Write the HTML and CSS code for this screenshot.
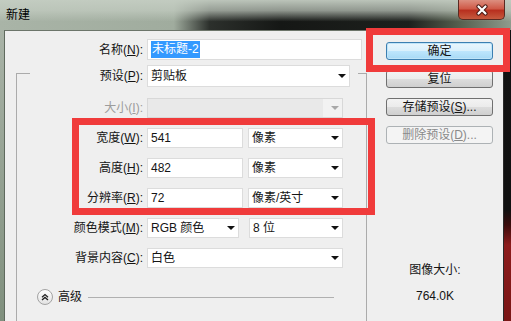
FILE: index.html
```html
<!DOCTYPE html>
<html lang="zh-CN">
<head>
  <meta charset="UTF-8" />
  <title>新建</title>
  <link rel="stylesheet" href="styles.css">
</head>
<body>
  <div class="win">
    <div class="titlebar">
      <span class="title">新建</span>
      <span class="close">
        <svg width="14" height="12" viewBox="0 0 14 12">
          <path d="M3.5 2.5 L10.5 9.5 M10.5 2.5 L3.5 9.5" stroke="#4a1a14" stroke-width="4.2" stroke-linecap="round"/>
          <path d="M3.5 2.5 L10.5 9.5 M10.5 2.5 L3.5 9.5" stroke="#fff" stroke-width="2.2" stroke-linecap="round"/>
        </svg>
      </span>
    </div>

    <div class="frame">
      <div class="edge-l"></div>
      <div class="client">
        <div class="main">
          <div class="row name-row">
            <label class="lbl">名称(<u>N</u>):</label>
            <div class="field f-name"><span class="sel">未标题-2</span></div>
          </div>

          <fieldset class="group">
            <legend>
              <div class="row legend-row">
                <label class="lbl">预设(<u>P</u>):</label>
                <div class="field dd f-preset">剪贴板</div>
              </div>
            </legend>
            <div class="group-body">
              <div class="row">
                <label class="lbl off">大小(<u>I</u>):</label>
                <div class="field dd off f-wide"></div>
              </div>
              <div class="row">
                <label class="lbl">宽度(<u>W</u>):</label>
                <div class="field f-num">541</div>
                <div class="field dd f-unit">像素</div>
              </div>
              <div class="row">
                <label class="lbl">高度(<u>H</u>):</label>
                <div class="field f-num">482</div>
                <div class="field dd f-unit">像素</div>
              </div>
              <div class="row">
                <label class="lbl">分辨率(<u>R</u>):</label>
                <div class="field f-num">72</div>
                <div class="field dd f-unit">像素/英寸</div>
              </div>
              <div class="row">
                <label class="lbl">颜色模式(<u>M</u>):</label>
                <div class="field dd f-mode">RGB 颜色</div>
                <div class="field dd f-bits">8 位</div>
              </div>
              <div class="row">
                <label class="lbl">背景内容(<u>C</u>):</label>
                <div class="field dd f-wide">白色</div>
              </div>
              <div class="adv">
                <span class="adv-btn">
                  <svg width="14" height="14" viewBox="0 0 14 14">
                    <path d="M4 7.2 L7 4.6 L10 7.2 M4 10 L7 7.4 L10 10" fill="none" stroke="#222" stroke-width="1.3"/>
                  </svg>
                </span>
                <span class="adv-text">高级</span>
                <span class="adv-line"></span>
              </div>
            </div>
          </fieldset>
        </div>

        <div class="side">
          <div class="btns">
            <div class="btn default">确定</div>
            <div class="btn">复位</div>
            <div class="btn">存储预设(<u>S</u>)...</div>
            <div class="btn disabled">删除预设(<u>D</u>)...</div>
          </div>
          <div class="info">图像大小:<br>764.0K</div>
        </div>
      </div>
      <div class="edge-r"></div>
    </div>

    <div class="mark mark-ok"></div>
    <div class="mark mark-size"></div>
  </div>
</body>
</html>
```

FILE: styles.css
```css
* {
  box-sizing: border-box;
}

body {
  margin: 0;
  font-family: 'Liberation Sans', 'Noto Sans CJK SC', sans-serif;
  font-size: 12px;
  color: #141414;
}

u {
  text-decoration: underline;
  text-underline-offset: 1px;
}

.win {
  position: relative;
  width: 511px;
  height: 321px;
  overflow: hidden;
  display: flex;
  flex-direction: column;
}

/* title bar */
.titlebar {
  height: 30px;
  flex: none;
  display: flex;
  align-items: flex-start;
  padding-left: 6px;
  background:
    linear-gradient(to bottom, rgba(196, 205, 194, 0.95) 0, rgba(196, 205, 194, 0.7) 35%, rgba(196, 205, 194, 0) 72%),
    linear-gradient(to right, #a9b4a7 0, #a0ac9e 34%, #2c302c 41%, #151715 55%, #1d201d 80%, #56604f 90%, #8f9b8d 100%);
}

.title {
  margin-top: 7px;
  line-height: 16px;
  color: #000;
}

.close {
  margin-left: auto;
  margin-right: 6px;
  width: 47px;
  height: 20px;
  display: flex;
  align-items: center;
  justify-content: center;
  border: 1px solid #5a2a22;
  border-top: none;
  border-radius: 0 0 5px 5px;
  background: linear-gradient(to bottom, #dc8f80 0, #cf5a48 45%, #b8301f 55%, #c65a3e 100%);
}

/* window body */
.frame {
  flex: 1;
  display: flex;
  min-height: 0;
}

.edge-l {
  width: 4px;
  background: linear-gradient(to bottom, #a9b3a7, #80907e);
}

.edge-r {
  width: 7px;
  background: linear-gradient(to bottom, #121212 0, #111 180px, #3a0c0c 195px, #8c1c1c 215px, #7a1616 100%);
}

.client {
  flex: 1;
  display: flex;
  background: #efefef;
  border-top: 1px solid #6c756a;
  border-left: 1px solid #5f6a5e;
  border-right: 1px solid #2a2a2a;
}

.main {
  width: 362px;
  padding-top: 8px;
}

.row {
  display: flex;
  align-items: center;
  gap: 4px;
  height: 20px;
}

.lbl {
  flex: none;
  text-align: right;
  white-space: nowrap;
  line-height: 20px;
  width: 126px;
}

.lbl.off {
  color: #9c9c9c;
}

.field {
  height: 100%;
  flex: none;
  display: flex;
  align-items: center;
  padding-left: 3px;
  background: #fff;
  border: 1px solid #dcdcdc;
  line-height: 16px;
  white-space: nowrap;
}

.dd {
  padding-right: 3px;
}

.dd::after {
  content: "";
  margin-left: auto;
  border-left: 4px solid transparent;
  border-right: 4px solid transparent;
  border-top: 4px solid #111;
}

.dd.off {
  background: linear-gradient(to left, #f2f2f2 19px, #e9e9e9 19px);
  border-color: #d8d8d8;
}

.dd.off::after {
  border-top-color: #a8a8a8;
}

.sel {
  background: #3399ff;
  color: #fff;
  padding: 0 1px;
  line-height: 17px;
}

.name-row {
  height: 21px;
}

.name-row .lbl {
  width: 138px;
}

.f-name { width: 215px; }
.f-preset { width: 203px; }
.f-wide { width: 196px; }
.f-num { width: 96px; }
.f-unit { width: 95px; margin-left: 1px; }
.f-mode { width: 92px; }
.f-bits { width: 94px; margin-left: 6px; }

/* preset group */
.group {
  margin: 5px 0 0 11px;
  padding: 0;
  width: 351px;
  height: 300px;
  border: 1px solid #ababab;
  border-bottom: none;
}

.group legend {
  margin-left: 13px;
  padding: 0 8px 0 0;
  width: 328px;
  height: 16px;
}

.legend-row {
  height: 22px;
  align-items: flex-start;
}

.legend-row .lbl {
  width: 113px;
  line-height: 22px;
}

.group-body {
  padding-top: 17px;
  display: flex;
  flex-direction: column;
  gap: 10px;
}

.adv {
  display: flex;
  align-items: center;
  gap: 5px;
  height: 16px;
  margin-top: 11px;
  padding: 0 32px 0 20px;
}

.adv-btn {
  width: 16px;
  height: 16px;
  border-radius: 50%;
  border: 1px solid #a3a3a3;
  background: linear-gradient(to bottom, #ffffff, #e2e2e2);
  display: flex;
  align-items: center;
  justify-content: center;
}

.adv-text {
  line-height: 16px;
  font-size: 12px;
}

.adv-line {
  flex: 1;
  height: 1px;
  margin-left: 1px;
  background: #b0b0b0;
}

/* right column */
.side {
  width: 136px;
  display: flex;
  flex-direction: column;
}

.btns {
  padding: 11px 0 0 19px;
  display: flex;
  flex-direction: column;
  gap: 10px;
}

.btn {
  width: 107px;
  height: 18px;
  border: 1px solid #707070;
  border-radius: 3px;
  background: linear-gradient(to bottom, #f3f3f3 0, #ebebeb 50%, #dddddd 50%, #cfcfcf 100%);
  text-align: center;
  line-height: 16px;
  white-space: nowrap;
}

.btn.default {
  border-color: #3c7fb1;
  box-shadow: inset 0 0 0 1px #bfe4f8;
  background: linear-gradient(to bottom, #eaf6fd 0, #d9f0fc 50%, #bee6fd 50%, #a7d9f5 100%);
}

.btn.disabled {
  border-color: #adb2b5;
  background: #f4f4f4;
  color: #8a8a8a;
}

.info {
  margin-top: 113px;
  text-align: center;
  line-height: 26px;
}

/* annotation boxes */
.mark {
  position: absolute;
  border: 7px solid #f03b3b;
}

.mark-ok {
  left: 366px;
  top: 28px;
  width: 144px;
  height: 44px;
}

.mark-size {
  left: 72px;
  top: 118px;
  width: 303px;
  height: 97px;
}
```
